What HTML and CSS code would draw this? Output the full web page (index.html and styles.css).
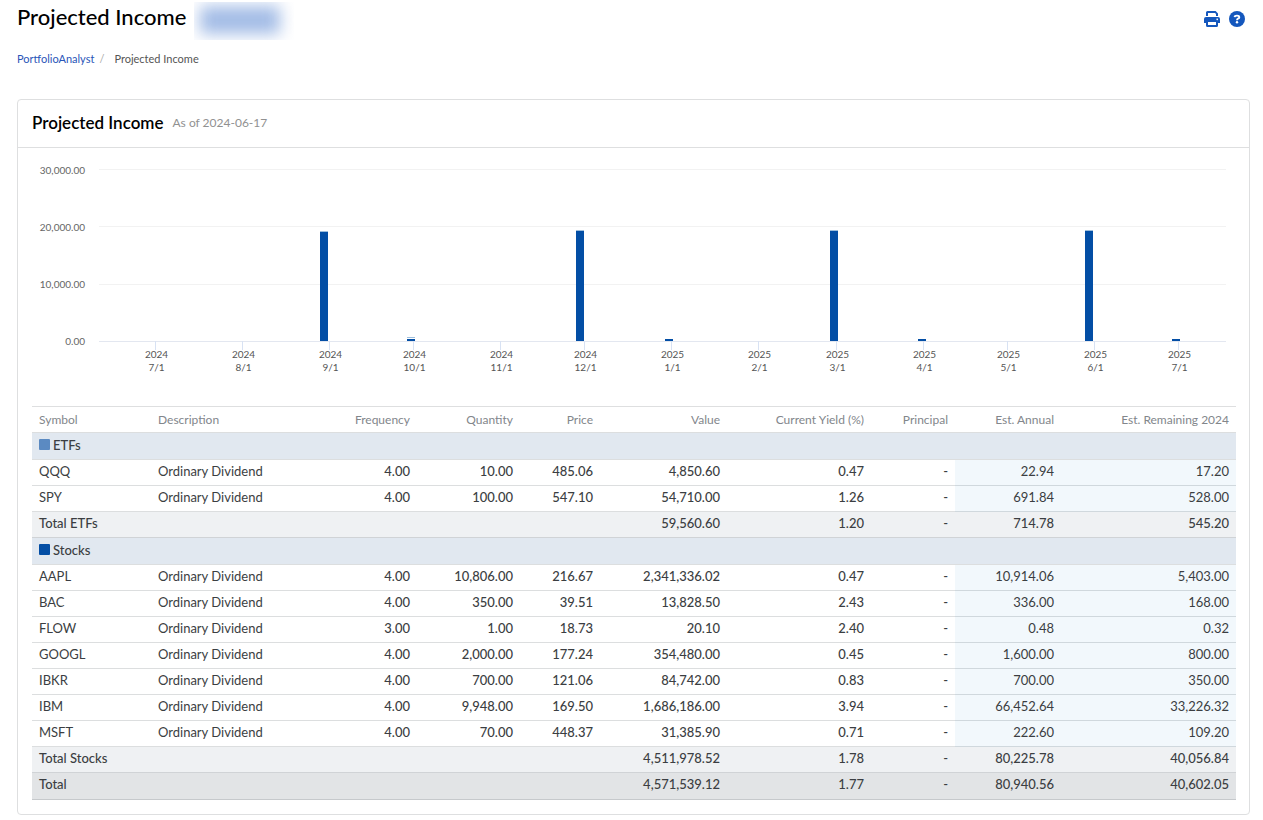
FILE: index.html
```html
<!DOCTYPE html>
<html lang="en">
<head>
<meta charset="utf-8">
<title>Projected Income</title>
<link rel="stylesheet" href="styles.css">
</head>
<body>
<header class="page-header">
  <h1 class="page-title">Projected Income</h1>
  <div class="account-mask"><div class="account-blur"></div></div>
  <div class="actions">
    <button class="icon-button" type="button" aria-label="Print">
      <svg width="16" height="16" viewBox="0 0 16 16"><path fill="#1457bd" fill-rule="evenodd" d="M2 5V1.500Q2 0 3.500 0H11.600L14 2.400V5H12V3L11 2H4V5ZM2 6H14Q16 6 16 8V12H14V14.500Q14 16 12.500 16H3.500Q2 16 2 14.500V12H0V8Q0 6 2 6ZM4 11V14H12V11ZM13.200 7.500A.8 .8 0 1 0 13.210 7.500Z"/></svg>
    </button>
    <button class="icon-button" type="button" aria-label="Help">
      <svg width="16" height="16" viewBox="0 0 16 16"><circle cx="8" cy="8" r="8" fill="#1457bd"/><path d="M5.600 6.200Q5.800 4.600 8 4.600T10.300 6.200Q10.300 7.200 9 7.700Q8 8.100 8 9.200" fill="none" stroke="#fff" stroke-width="1.900"/><circle cx="8" cy="11.300" r="1.200" fill="#fff"/></svg>
    </button>
  </div>
</header>
<nav class="breadcrumb" aria-label="Breadcrumb">
  <a href="#">PortfolioAnalyst</a><span class="slash">/</span><span>Projected Income</span>
</nav>
<main class="card">
  <div class="card-header">
    <h2 class="card-title">Projected Income</h2>
    <span class="as-of">As of 2024-06-17</span>
  </div>
  <div class="card-body">
    <section class="chart" aria-label="Projected income by month">
      <div class="y-axis"><span>30,000.00</span><span>20,000.00</span><span>10,000.00</span><span>0.00</span></div>
      <svg class="plot" id="plot"></svg>
    </section>
    <table class="income">
      <colgroup><col class="w-symbol"><col class="w-desc"><col class="w-freq"><col class="w-qty"><col class="w-price"><col class="w-value"><col class="w-yield"><col class="w-principal"><col class="w-annual"><col class="w-remain"></colgroup>
      <thead><tr><th>Symbol</th><th>Description</th><th>Frequency</th><th>Quantity</th><th>Price</th><th>Value</th><th>Current Yield (%)</th><th>Principal</th><th>Est. Annual</th><th>Est. Remaining 2024</th></tr></thead>
      <tbody>
        <tr class="group"><td colspan="10"><span class="swatch etf"></span>ETFs</td></tr>
        <tr><td>QQQ</td><td>Ordinary Dividend</td><td>4.00</td><td>10.00</td><td>485.06</td><td>4,850.60</td><td>0.47</td><td>-</td><td>22.94</td><td>17.20</td></tr>
        <tr><td>SPY</td><td>Ordinary Dividend</td><td>4.00</td><td>100.00</td><td>547.10</td><td>54,710.00</td><td>1.26</td><td>-</td><td>691.84</td><td>528.00</td></tr>
        <tr class="subtotal"><td>Total ETFs</td><td></td><td></td><td></td><td></td><td>59,560.60</td><td>1.20</td><td>-</td><td>714.78</td><td>545.20</td></tr>
      </tbody>
      <tbody>
        <tr class="group"><td colspan="10"><span class="swatch stock"></span>Stocks</td></tr>
        <tr><td>AAPL</td><td>Ordinary Dividend</td><td>4.00</td><td>10,806.00</td><td>216.67</td><td>2,341,336.02</td><td>0.47</td><td>-</td><td>10,914.06</td><td>5,403.00</td></tr>
        <tr><td>BAC</td><td>Ordinary Dividend</td><td>4.00</td><td>350.00</td><td>39.51</td><td>13,828.50</td><td>2.43</td><td>-</td><td>336.00</td><td>168.00</td></tr>
        <tr><td>FLOW</td><td>Ordinary Dividend</td><td>3.00</td><td>1.00</td><td>18.73</td><td>20.10</td><td>2.40</td><td>-</td><td>0.48</td><td>0.32</td></tr>
        <tr><td>GOOGL</td><td>Ordinary Dividend</td><td>4.00</td><td>2,000.00</td><td>177.24</td><td>354,480.00</td><td>0.45</td><td>-</td><td>1,600.00</td><td>800.00</td></tr>
        <tr><td>IBKR</td><td>Ordinary Dividend</td><td>4.00</td><td>700.00</td><td>121.06</td><td>84,742.00</td><td>0.83</td><td>-</td><td>700.00</td><td>350.00</td></tr>
        <tr><td>IBM</td><td>Ordinary Dividend</td><td>4.00</td><td>9,948.00</td><td>169.50</td><td>1,686,186.00</td><td>3.94</td><td>-</td><td>66,452.64</td><td>33,226.32</td></tr>
        <tr><td>MSFT</td><td>Ordinary Dividend</td><td>4.00</td><td>70.00</td><td>448.37</td><td>31,385.90</td><td>0.71</td><td>-</td><td>222.60</td><td>109.20</td></tr>
        <tr class="subtotal"><td>Total Stocks</td><td></td><td></td><td></td><td></td><td>4,511,978.52</td><td>1.78</td><td>-</td><td>80,225.78</td><td>40,056.84</td></tr>
      </tbody>
      <tfoot>
        <tr class="total"><td>Total</td><td></td><td></td><td></td><td></td><td>4,571,539.12</td><td>1.77</td><td>-</td><td>80,940.56</td><td>40,602.05</td></tr>
      </tfoot>
    </table>
  </div>
</main>
<script src="chart.js"></script>
</body>
</html>
```
FILE: styles.css
```css
* { box-sizing: border-box; }
body {
  margin: 0;
  padding: 0 13px 5px 17px;
  background: #fff;
  color: #3b3e42;
  font-family: Lato, "Open Sans", sans-serif;
  font-size: 13px;
}
h1, h2 { margin: 0; color: #000; }
.page-header { display: flex; align-items: flex-start; height: 40px; }
.page-title { font-size: 22px; font-weight: 500; line-height: 34px; }
.account-mask { margin: 2px 0 0 8px; width: 100px; height: 38px; overflow: hidden; }
.account-blur { margin: 4px 0 0 6px; width: 80px; height: 28px; background: #a3bce6; filter: blur(8px); }
.actions { display: flex; gap: 9px; margin: 11px 5px 0 auto; }
.icon-button { display: block; width: 16px; height: 16px; padding: 0; border: 0; background: none; cursor: pointer; }
.icon-button svg { display: block; }
.breadcrumb { display: flex; margin-top: 10px; font-size: 11px; line-height: 18px; color: #555; }
.breadcrumb a { color: #2a55b8; text-decoration: none; }
.slash { margin: 0 10px 0 5px; color: #aaa; }
.card { margin-top: 31px; border: 1px solid #dedfe0; border-radius: 4px; }
.card-header { display: flex; align-items: center; gap: 9px; height: 48px; padding: 0 14px 2px; border-bottom: 1px solid #dedfe0; }
.card-title { font-size: 17px; font-weight: 600; line-height: 24px; }
.as-of { font-size: 12px; color: #919191; }
.card-body { padding: 13px 13px 14px 14px; }
.chart { display: grid; grid-template-columns: 53px minmax(0, 1fr); column-gap: 14px; padding-right: 10px; height: 245px; font-size: 10px; }
.y-axis { display: flex; flex-direction: column; gap: 39px; text-align: right; line-height: 18px; color: #666; }
.plot { width: 100%; height: 230px; overflow: visible; fill: #555; }
.plot .grid { stroke: #f2f2f2; }
.plot .axis { stroke: #e3e7f0; }
.plot .tick { stroke: #d8e2f3; }
.plot .stock { fill: #034ea5; }
.plot .etf { fill: #9fbfdc; }
.income { width: 100%; border-collapse: separate; border-spacing: 0; table-layout: fixed; border-top: 1px solid #dedfe0; line-height: 22px; }
.w-symbol { width: 119px; }
.w-desc { width: 150px; }
.w-freq { width: 116px; }
.w-qty { width: 103px; }
.w-price { width: 80px; }
.w-value { width: 127px; }
.w-yield { width: 144px; }
.w-principal { width: 84px; }
.w-annual { width: 106px; }
.w-remain { width: 175px; }
.income th, .income td { height: 26px; padding: 0 7px; border-bottom: 1px solid #dcdedf; text-align: right; white-space: nowrap; vertical-align: top; }
.income th { font-size: 12px; font-weight: 400; color: #82868b; line-height: 25px; }
.income td { font-weight: 500; }
.income th:nth-child(-n+2), .income td:nth-child(-n+2) { text-align: left; }
.income td:nth-child(-n+2) { font-weight: 400; }
.income td:nth-child(n+9) { background: #f2f8fc; border-color: #d0d8dd; font-weight: 400; }
.income .group td { height: 27px; background: #e1e8f0; font-weight: 500; line-height: 24px; }
.income .subtotal td { background: #eff1f3; border-color: #d0d3d6; font-weight: 500; }
.income .total td { height: 27px; background: #e2e4e6; border-color: #c6c9cc; font-weight: 500; }
.swatch { display: inline-block; width: 11px; height: 11px; margin-right: 3px; border-radius: 1px; }
.swatch.etf { background: #5b8ac2; }
.swatch.stock { background: #034ea5; }
```
FILE: chart.js
```js
const NS = "http://www.w3.org/2000/svg";
const plot = document.getElementById("plot");
const SPAN = 1127;
const BASE = 180;
const months = [
  ["2024", "7/1", 57], ["2024", "8/1", 144], ["2024", "9/1", 231], ["2024", "10/1", 315],
  ["2024", "11/1", 402], ["2024", "12/1", 486], ["2025", "1/1", 573], ["2025", "2/1", 660],
  ["2025", "3/1", 738], ["2025", "4/1", 825], ["2025", "5/1", 909], ["2025", "6/1", 996], ["2025", "7/1", 1080]
];
// position on the time axis, stock height, ETF height
const bars = [[221, 109, 1], [308, 2, 2], [477, 110, 1], [566, 2, 0], [731, 110, 1], [819, 2, 0], [986, 110, 1], [1073, 2, 0]];

function add(tag, attrs, text) {
  const el = document.createElementNS(NS, tag);
  for (const key in attrs) el.setAttribute(key, attrs[key]);
  if (text) el.textContent = text;
  plot.appendChild(el);
}
const pct = v => (v / SPAN * 100) + "%";

[8, 65, 123].forEach(y => add("line", { class: "grid", x1: 0, x2: "100%", y1: y + 0.5, y2: y + 0.5 }));
add("line", { class: "axis", x1: 0, x2: "100%", y1: BASE + 0.5, y2: BASE + 0.5 });
months.forEach(([year, day, x]) => {
  add("line", { class: "tick", x1: pct(x - 0.5), x2: pct(x - 0.5), y1: BASE, y2: BASE + 9 });
  add("text", { x: pct(x + 0.5), y: BASE + 17, "text-anchor": "middle" }, year);
  add("text", { x: pct(x + 0.5), y: BASE + 30, "text-anchor": "middle" }, day);
});
bars.forEach(([x, stock, etf]) => {
  add("rect", { class: "stock", x: pct(x), y: BASE - stock, width: 8, height: stock });
  if (etf) add("rect", { class: "etf", x: pct(x), y: BASE - stock - etf, width: 8, height: 1 });
});
```
